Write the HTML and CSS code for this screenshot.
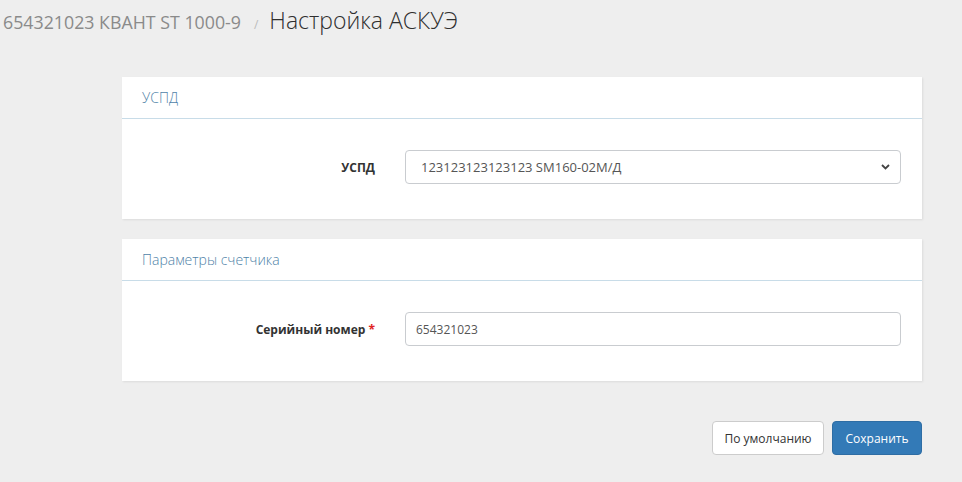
FILE: index.html
```html
<!DOCTYPE html>
<html lang="ru">
<head>
<meta charset="utf-8">
<title>Настройка АСКУЭ</title>
<link rel="stylesheet" href="styles.css">
</head>
<body>
<div class="page-head">
  <span class="crumb">654321023 КВАНТ ST 1000-9</span>
  <span class="sep">/</span>
  <h1 class="page-title">Настройка АСКУЭ</h1>
</div>
<div class="content">
  <div class="panel">
    <div class="panel-title">УСПД</div>
    <div class="panel-body">
      <div class="form-row">
        <label class="form-label">УСПД</label>
        <div class="form-control select">
          <span>123123123123123 SM160-02M/Д</span>
          <svg class="chevron" width="9" height="6" viewBox="0 0 9 6"><path d="M1 1 L4.5 4.5 L8 1" fill="none" stroke="#444" stroke-width="1.8"/></svg>
        </div>
      </div>
    </div>
  </div>
  <div class="panel">
    <div class="panel-title">Параметры счетчика</div>
    <div class="panel-body">
      <div class="form-row">
        <label class="form-label">Серийный номер <span class="req">*</span></label>
        <div class="form-control input">654321023</div>
      </div>
    </div>
  </div>
  <div class="actions">
    <button class="btn btn-default">По умолчанию</button>
    <button class="btn btn-primary">Сохранить</button>
  </div>
</div>
</body>
</html>
```
FILE: styles.css
```css
html, body {
  margin: 0;
  padding: 0;
}
body {
  background: #eeeeee;
  font-family: "Open Sans", "DejaVu Sans", sans-serif;
  color: #333;
  width: 962px;
  height: 482px;
  overflow: hidden;
}
.page-head {
  display: flex;
  align-items: baseline;
  padding: 4px 0 0 3px;
  height: 77px;
  box-sizing: border-box;
}
.crumb {
  font-size: 17.8px;
  color: #8a8a8a;
}
.sep {
  font-size: 12px;
  color: #bbb;
  margin: 0 11px 0 13px;
}
.page-title {
  margin: 0;
  font-size: 23px;
  font-weight: 300;
  color: #2f2f2f;
}
.content {
  margin-left: 122px;
  width: 800px;
}
.panel {
  background: #fff;
  box-shadow: 1px 1px 2px rgba(0, 0, 0, 0.08);
  margin-bottom: 20px;
}
.panel-title {
  height: 41px;
  line-height: 41px;
  padding-left: 20px;
  font-size: 14px;
  font-weight: 300;
  color: #4f83a8;
  border-bottom: 1px solid #c8dce8;
}
.panel-body {
  padding: 31px 21px 35px 0;
}
.form-row {
  display: grid;
  grid-template-columns: 253px 1fr;
  column-gap: 30px;
  align-items: center;
}
.form-label {
  text-align: right;
  font-size: 12px;
  font-weight: 700;
  color: #333;
}
.req {
  color: #e02222;
}
.form-control {
  height: 34px;
  box-sizing: border-box;
  border: 1px solid #c9ccd0;
  border-radius: 4px;
  font-size: 12px;
  color: #555;
  display: flex;
  align-items: center;
  background: #fff;
}
.select {
  font-size: 13px;
  padding: 0 10px 0 15px;
  justify-content: space-between;
}
.input {
  padding: 0 10px;
}
.chevron {
  display: block;
}
.actions {
  display: flex;
  justify-content: flex-end;
  gap: 8px;
  margin-top: 40px;
}
.btn {
  height: 34px;
  box-sizing: border-box;
  border-radius: 4px;
  font-family: "Open Sans", "DejaVu Sans", sans-serif;
  font-size: 12px;
  padding: 0;
  white-space: nowrap;
  cursor: pointer;
}
.btn-default {
  width: 112px;
  background: #fff;
  border: 1px solid #ccc;
  color: #333;
}
.btn-primary {
  width: 90px;
  background: #337ab7;
  border: 1px solid #2e6da4;
  color: #fff;
}
```
